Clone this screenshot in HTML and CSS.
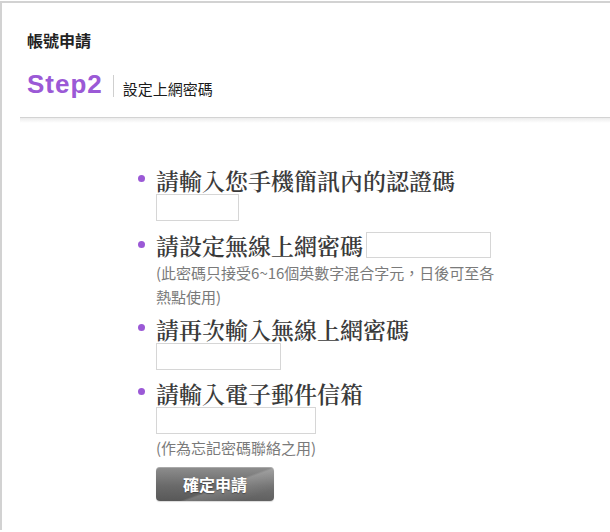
FILE: index.html
```html
<!DOCTYPE html>
<html lang="zh-Hant">
<head>
<meta charset="utf-8">
<title>帳號申請</title>
<link rel="stylesheet" href="styles.css">
</head>
<body>
<div class="page">
  <div class="head">
    <h1 class="title">帳號申請</h1>
    <div class="step">
      <span class="step-no">Step2</span>
      <span class="step-sep"></span>
      <span class="step-name">設定上網密碼</span>
    </div>
  </div>
  <div class="divider"></div>
  <ul class="form">
    <li class="item">
      <span class="dot"></span>
      <div class="body">
        <div class="q">請輸入您手機簡訊內的認證碼</div>
        <input class="field w83" type="text">
      </div>
    </li>
    <li class="item">
      <span class="dot"></span>
      <div class="body">
        <div class="row"><span class="q">請設定無線上網密碼</span><input class="field w125 inline" type="password"></div>
        <p class="note">(此密碼只接受6~16個英數字混合字元，日後可至各熱點使用)</p>
      </div>
    </li>
    <li class="item">
      <span class="dot"></span>
      <div class="body">
        <div class="q">請再次輸入無線上網密碼</div>
        <input class="field w125" type="password">
      </div>
    </li>
    <li class="item">
      <span class="dot"></span>
      <div class="body">
        <div class="q">請輸入電子郵件信箱</div>
        <input class="field w160" type="text">
        <p class="note">(作為忘記密碼聯絡之用)</p>
      </div>
    </li>
  </ul>
  <div class="actions">
    <button class="submit" type="button">確定申請</button>
  </div>
</div>
</body>
</html>
```

FILE: styles.css
```css
html, body {
  margin: 0;
  padding: 0;
  background: #fff;
}

.page {
  margin-top: 1px;
  border-top: 2px solid #d2d2d2;
  border-left: 2px solid #d2d2d2;
  min-height: 529px;
  box-sizing: border-box;
  font-family: "Noto Sans CJK TC", "Noto Sans", sans-serif;
}

.head {
  padding: 27px 0 0 25px;
}

.title {
  margin: 0;
  font-size: 16px;
  line-height: 20px;
  font-weight: bold;
  color: #222;
}

.step {
  display: flex;
  align-items: flex-start;
  height: 30px;
  margin-top: 19px;
}

.step-no {
  font-family: "Liberation Sans", Arial, sans-serif;
  font-weight: bold;
  font-size: 26px;
  line-height: 30px;
  letter-spacing: 1px;
  color: #9b59d6;
}

.step-sep {
  width: 1px;
  height: 22px;
  margin: 6px 9px 0 10px;
  background: #cfcfcf;
}

.step-name {
  margin-top: 10px;
  font-size: 15px;
  line-height: 20px;
  color: #1a1a1a;
}

.divider {
  margin: 18px 0 0 18px;
  height: 5px;
  border-top: 1px solid #d3d3d3;
  background: linear-gradient(#ececec, #fff);
}

.form {
  list-style: none;
  margin: 44px 0 0 0;
  padding: 0 0 0 136px;
  display: flex;
  flex-direction: column;
  gap: 10px;
}

.item {
  display: grid;
  grid-template-columns: 7px 340px;
  column-gap: 11px;
}

.dot {
  width: 7px;
  height: 7px;
  border-radius: 50%;
  background: #9b59d6;
  margin-top: 8px;
}

.item:nth-child(2) .dot {
  margin-top: 10px;
}

.q {
  font-family: "Noto Serif CJK TC", "Noto Sans CJK TC", serif;
  font-size: 23px;
  font-weight: 600;
  line-height: 27px;
  color: #3a3a3a;
}

.row {
  display: flex;
  align-items: center;
  height: 28px;
}

.field {
  display: block;
  box-sizing: border-box;
  height: 27px;
  border: 1px solid #d6d6d6;
  background: #fff;
  margin: 0;
  padding: 0 4px;
}

.field.inline {
  height: 26px;
  margin-left: 3px;
}

.w83 { width: 83px; }
.w125 { width: 125px; }
.w160 { width: 160px; }

.note {
  margin: 2px 0 -3px;
  font-size: 15px;
  line-height: 24px;
  color: #7a7a7a;
}

.actions {
  padding-left: 154px;
  margin-top: 10px;
}

.submit {
  display: block;
  width: 118px;
  height: 34px;
  border: 0;
  border-radius: 4px;
  padding: 0;
  background:
    linear-gradient(160deg, rgba(255,255,255,0) 55%, rgba(255,255,255,0.18) 58%, rgba(255,255,255,0.05) 85%),
    linear-gradient(#8e8e8e, #6a6a6a 55%, #585858);
  box-shadow: inset 0 1px 0 rgba(255,255,255,0.25), 0 1px 1px rgba(0,0,0,0.15);
  color: #fff;
  font-family: "Noto Sans CJK TC", "Noto Sans", sans-serif;
  font-size: 16px;
  font-weight: bold;
  line-height: 34px;
  text-shadow: 0 1px 1px rgba(0,0,0,0.35);
  cursor: pointer;
}
```
